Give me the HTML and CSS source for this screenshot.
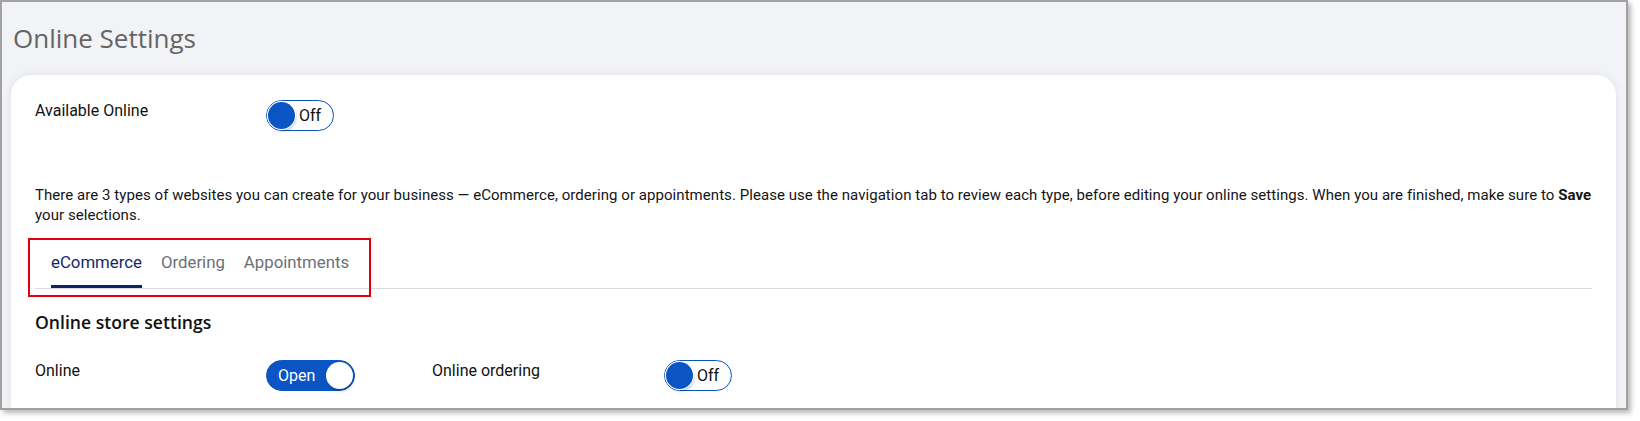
FILE: index.html
```html
<!DOCTYPE html>
<html lang="en">
<head>
<meta charset="utf-8">
<title>Online Settings</title>
<link rel="stylesheet" href="styles.css">
</head>
<body>
<div class="frame">
  <h1 class="page-title">Online Settings</h1>
  <div class="card">
    <div class="row">
      <div class="label">Available Online</div>
      <span class="toggle toggle-off"><span class="knob"></span><span class="toggle-text">Off</span></span>
    </div>
    <p class="intro">There are 3 types of websites you can create for your business — eCommerce, ordering or appointments. Please use the navigation tab to review each type, before editing your online settings. When you are finished, make sure to <b>Save</b> your selections.</p>
    <div class="tabs-wrap">
      <div class="tabs">
        <span class="tab active">eCommerce</span>
        <span class="tab">Ordering</span>
        <span class="tab">Appointments</span>
      </div>
      <div class="highlight"></div>
    </div>
    <h2 class="section-title">Online store settings</h2>
    <div class="grid">
      <div class="label">Online</div>
      <div><span class="toggle toggle-on"><span class="toggle-text">Open</span><span class="knob"></span></span></div>
      <div class="label">Online ordering</div>
      <div><span class="toggle toggle-off"><span class="knob"></span><span class="toggle-text">Off</span></span></div>
    </div>
  </div>
</div>
</body>
</html>
```
FILE: styles.css
```css
* { box-sizing: border-box; }
html, body { margin: 0; padding: 0; background: #ffffff; }
body { width: 1640px; height: 421px; overflow: hidden; font-family: Roboto, "Liberation Sans", sans-serif; }

.frame {
  width: 1628px;
  height: 410px;
  border: 2px solid #a2a2a2;
  background: #f2f3f7;
  box-shadow: 3px 3px 5px rgba(0, 0, 0, 0.28);
  overflow: hidden;
  position: relative;
}

.page-title {
  margin: 0;
  padding: 20px 0 0 11px;
  height: 52px;
  font-family: "Open Sans", "Noto Sans", sans-serif;
  font-weight: 400;
  font-size: 26px;
  line-height: 32px;
  color: #656565;
}

.card {
  margin: 21px 10px 0 9px;
  background: #ffffff;
  border-radius: 20px 20px 0 0;
  box-shadow: 0 0 8px rgba(0, 0, 0, 0.08);
  padding: 25px 24px 40px 24px;
  height: 400px;
}

.row { display: flex; align-items: flex-start; }
.label {
  width: 231px;
  font-size: 16px;
  line-height: 20px;
  padding-top: 1px;
  color: #111;
}

.toggle {
  display: inline-flex;
  align-items: center;
  height: 31px;
  border-radius: 16px;
  border: 1px solid #0a54c4;
  padding: 1px;
}
.toggle .knob {
  width: 27px;
  height: 27px;
  border-radius: 50%;
  flex: none;
}
.toggle-off { width: 68px; background: #fff; }
.toggle-off .knob {
  background: #0a54c4;
  box-shadow: 0 0 0 1px #fff, 1px 2px 3px rgba(0, 0, 0, 0.25);
}
.toggle-off .toggle-text {
  margin-left: 4px;
  font-size: 16px;
  color: #111;
}
.toggle-on {
  width: 89px;
  background: #0a54c4;
  justify-content: space-between;
}
.toggle-on .toggle-text {
  margin-left: 10px;
  font-size: 16px;
  color: #fff;
}
.toggle-on .knob {
  background: #fff;
  box-shadow: 1px 2px 3px rgba(0, 0, 0, 0.2);
}

.intro {
  margin: 54px 0 0 0;
  font-size: 15px;
  line-height: 20px;
  letter-spacing: 0.055px;
  color: #151515;
}
.intro b { font-weight: 700; }

.tabs-wrap { position: relative; margin-top: 13px; }
.tabs {
  display: flex;
  gap: 19px;
  padding-left: 16px;
  height: 51px;
  align-items: flex-end;
  border-bottom: 1px solid #dcdcdc;
}
.tab {
  font-size: 16.8px;
  line-height: 20px;
  padding-bottom: 13px;
  color: #6c6f78;
  border-bottom: 3px solid transparent;
}
.tab.active {
  color: #14276a;
  border-bottom-color: #0d2468;
}
.highlight {
  position: absolute;
  left: -7px;
  top: 0;
  width: 343px;
  height: 59px;
  border: 2px solid #e0000b;
}

.section-title {
  margin: 21px 0 0 0;
  font-family: "Open Sans", "Noto Sans", sans-serif;
  font-weight: 600;
  font-size: 17.6px;
  line-height: 24px;
  color: #111;
}

.grid {
  display: grid;
  grid-template-columns: 231px 166px 232px auto;
  margin-top: 26px;
  align-items: start;
}
.grid .label { width: auto; }
```
